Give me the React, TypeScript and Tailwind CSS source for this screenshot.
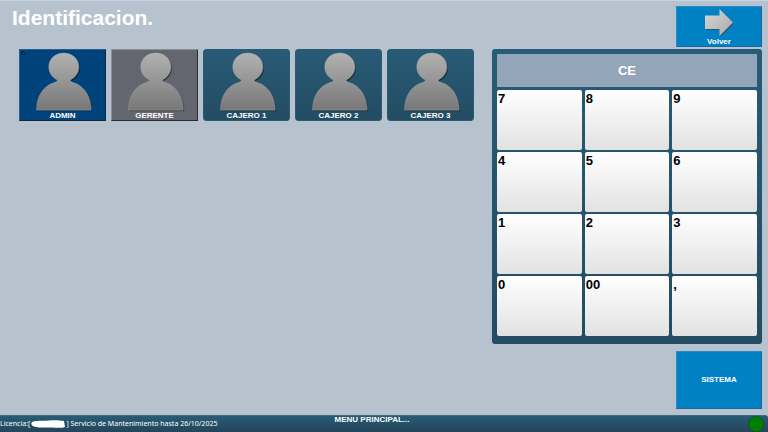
import React from 'react';
import clsx from 'clsx';

interface User {
  name: string;
  variant: 'admin' | 'manager' | 'cashier';
}

const users: User[] = [
  { name: 'ADMIN', variant: 'admin' },
  { name: 'GERENTE', variant: 'manager' },
  { name: 'CAJERO 1', variant: 'cashier' },
  { name: 'CAJERO 2', variant: 'cashier' },
  { name: 'CAJERO 3', variant: 'cashier' },
];

const keys = ['7', '8', '9', '4', '5', '6', '1', '2', '3', '0', '00', ','];

const variants = {
  admin: 'bg-[#00427a] border border-t-[#2a5f8c] border-l-[#2a5f8c] border-r-[#12263a] border-b-[#12263a]',
  manager: 'bg-[#64666f] border border-t-[#8d8f96] border-l-[#8d8f96] border-r-[#2b2c30] border-b-[#2b2c30]',
  cashier: 'rounded-[3px] border border-[#2c5a73] bg-linear-to-b from-[#285b76] to-[#234c63]',
};

function Avatar({ id }: { id: string }) {
  return (
    <svg viewBox="0 0 60 63" className="h-[63px] w-[60px]" aria-hidden="true">
      <defs>
        <linearGradient id={id} x1="0" y1="0" x2="0" y2="1">
          <stop offset="0" stopColor="#b2b2b2" />
          <stop offset="1" stopColor="#777777" />
        </linearGradient>
        <filter id={`${id}-shadow`} x="-10%" y="-10%" width="120%" height="120%">
          <feDropShadow dx="1" dy="1" stdDeviation="0.6" floodColor="#000" floodOpacity="0.65" />
        </filter>
      </defs>
      <path
        d="M24.500 30.500C19 28 15.500 23 15.500 17.300C15.500 9 22 3 30.800 3C39.500 3 46 9 46 17.300C46 23 42.500 28 37 30.500C37.500 32 38.500 32.500 40.500 33C51.500 36.500 58.200 46.500 58.500 61H3C3.300 46.500 10 36.500 21 33C23 32.500 24 32 24.500 30.500Z"
        fill={`url(#${id})`}
        stroke="#bdc0c0"
        strokeOpacity="0.5"
        strokeWidth="0.5"
        filter={`url(#${id}-shadow)`}
      />
    </svg>
  );
}

function UserTile({ user, id }: { user: User; id: string }) {
  return (
    <button
      type="button"
      className={clsx('relative flex h-[72px] w-[87px] flex-col items-center text-[8px] leading-[8px] font-bold text-white', variants[user.variant])}
    >
      <Avatar id={id} />
      <span>{user.name}</span>
      {user.variant === 'admin' && (
        <svg viewBox="0 0 6 6" className="absolute top-0 left-0 size-[6px]" aria-hidden="true">
          <path d="M1 1.500H4M1 3H3M1 4.500H4.500V2.500" fill="none" stroke="#08233f" strokeWidth="0.8" />
        </svg>
      )}
    </button>
  );
}

function ArrowIcon() {
  return (
    <svg viewBox="0 0 32 31" className="h-[31px] w-[32px]" aria-hidden="true">
      <defs>
        <linearGradient id="arrow" x1="0" y1="0" x2="1" y2="1">
          <stop offset="0" stopColor="#d8d8d8" />
          <stop offset="1" stopColor="#a8a8a8" />
        </linearGradient>
      </defs>
      <path d="M3 9.500H17.500V3L31 16.500L17.500 30V23H3Z" fill="#35495a" opacity="0.7" />
      <path d="M2 8.500H16.500V2L30 15.500L16.500 29V22H2Z" fill="url(#arrow)" />
    </svg>
  );
}

export default function App() {
  return (
    <div className="flex min-h-screen flex-col bg-[#b6c3cf] font-['Liberation_Sans',Arial,sans-serif]">
      <main className="flex flex-1 items-start justify-between border-t border-[#c9d4e2] pr-[6px] pb-[6px] pl-3">
        <section>
          <h1 className="pt-[5px] text-[21px] leading-6 font-bold text-white">Identificacion.</h1>
          <div className="mt-[19px] ml-[7px] flex flex-wrap gap-[5px]">
            {users.map((user, i) => (
              <UserTile key={user.name} user={user} id={`avatar-${i}`} />
            ))}
          </div>
        </section>

        <aside className="flex w-[270px] shrink-0 flex-col items-end pt-[5px]">
          <button
            type="button"
            className="flex h-[41px] w-[86px] flex-col items-center border border-[#2a8bc8] border-r-[#1c6799] border-b-[#1c6799] bg-[#0081c4] text-[8px] leading-[8px] font-bold text-white"
          >
            <ArrowIcon />
            <span>Volver</span>
          </button>

          <div className="mt-[2px] w-full rounded-[3px] bg-linear-to-b from-[#285b76] to-[#234c63] p-[5px] pb-2">
            <button
              type="button"
              className="h-[33px] w-full bg-[#92a5b9] text-[13px] font-bold text-white"
            >
              CE
            </button>
            <div className="mt-[3px] grid grid-cols-3 gap-x-[3px] gap-y-[2px]">
              {keys.map((key) => (
                <button
                  key={key}
                  type="button"
                  className="flex h-[60px] items-start rounded-[2px] bg-linear-to-b from-white to-[#e2e2e2] pt-[1px] pl-[1px] text-[13px] leading-4 font-bold text-black"
                >
                  {key}
                </button>
              ))}
            </div>
          </div>

          <button
            type="button"
            className="mt-[7px] h-[58px] w-[86px] border border-[#2a8bc8] border-r-[#1c6799] border-b-[#1c6799] bg-[#0081c4] text-[8px] font-bold text-white"
          >
            SISTEMA
          </button>
        </aside>
      </main>

      <footer className="grid h-[17px] grid-cols-[1fr_auto_1fr] items-start rounded-tr-[3px] border-t border-[#3b6a83] bg-linear-to-b from-[#285b76] to-[#234559] text-white">
        <p className="flex h-4 items-center font-['Noto_Sans','DejaVu_Sans',sans-serif] text-[7px] whitespace-nowrap">
          Licencia:[
          <svg viewBox="0 0 34 10" className="h-[10px] w-[36px]" aria-hidden="true">
            <path d="M1 3C5 1 12 2 18 1.500C24 1 29 1.500 33 2L34 8C30 9.500 26 8.500 21 8.500C14 8.500 8 9 3 7.500C0 6.500 0 4 1 3Z" fill="#fff" />
          </svg>
          <span>] Servicio de Mantenimiento hasta 26/10/2025</span>
        </p>
        <p className="pr-6 text-[8px] leading-[8px] font-bold">MENU PRINCIPAL...</p>
        <span className="mr-1 size-4 justify-self-end rounded-full border border-[#12561d] bg-[#008000]" />
      </footer>
    </div>
  );
}
